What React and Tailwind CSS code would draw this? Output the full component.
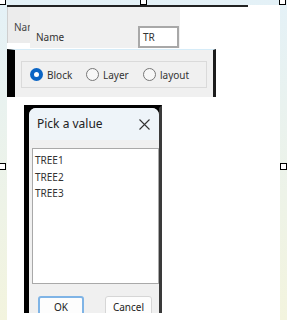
import React from "react";

const font = { fontFamily: '"Noto Sans", "Open Sans", sans-serif' };

const Handle = ({ className }) => (
  <div className={`absolute w-[7px] h-[7px] border border-black bg-white ${className}`} />
);

const Radio = ({ checked, label, width }) => (
  <div className={`flex items-center gap-[4px] ${width}`}>
    {checked ? (
      <span className="w-[13px] h-[13px] rounded-full bg-[#0a64c4] flex items-center justify-center">
        <span className="w-[5px] h-[5px] rounded-full bg-white" />
      </span>
    ) : (
      <span className="w-[13px] h-[13px] rounded-full border border-[#777] bg-[#f7f7f7]" />
    )}
    <span className="text-[10px] leading-none text-[#333]">{label}</span>
  </div>
);

export default function App() {
  return (
    <div
      className="relative w-[287px] h-[320px] overflow-hidden flex pl-[7px] pr-[7px] pt-[5px] bg-gradient-to-b from-[#e4f1f7] to-[#f3f4de]"
      style={font}
    >
      <div className="flex-1 bg-white flex flex-col">
        {/* top rule */}
        <div className="w-[241px] h-[2px] shrink-0 bg-[#222]" />

        {/* name panels */}
        <div className="flex items-start shrink-0">
          <div className="w-[23px] h-[36px] bg-[#ececec] overflow-hidden pl-[6px] pt-[15px] border-l border-[#cfcfcf]">
            <span className="block text-[10px] leading-none text-[#444] whitespace-nowrap">Name</span>
          </div>
          <div className="w-[150px] h-[41px] bg-[#f0f0f0] flex items-end">
            <span className="pl-[6px] pb-[6px] text-[10px] leading-none text-[#333]">Name</span>
            <div className="ml-auto mr-[1px] w-[41px] h-[22px] border-2 border-[#a8a8a8] bg-white flex items-center pl-[3px]">
              <span className="text-[10px] leading-none text-[#333]">TR</span>
            </div>
          </div>
        </div>

        {/* option panel */}
        <div className="mt-[1px] shrink-0 w-[209px] h-[48px] border-l-[8px] border-l-black border-r-[3px] border-r-[#1c1c1c] border-t border-t-[#d6ecf8] bg-[#f0f0f0] pt-[11px] px-[6px]">
          <div className="h-[27px] border border-[#dadada] flex items-center pl-[8px]">
            <Radio checked label="Block" width="w-[56px]" />
            <Radio label="Layer" width="w-[57px]" />
            <Radio label="layout" width="w-[50px]" />
          </div>
        </div>

        {/* dialog */}
        <div className="mt-[8px] ml-[17px] shrink-0 w-[138px] h-[208px] overflow-hidden bg-black border-l-[5px] border-l-black border-t-[3px] border-t-black border-r-[3px] border-r-[#3a3a3a]">
          <div className="h-full bg-[#f0f0f0] rounded-t-[7px] overflow-hidden flex flex-col">
            <div className="h-[32px] shrink-0 bg-[#eef4f9] flex items-center justify-between pl-[8px] pr-[9px]">
              <span className="text-[12px] leading-none text-[#222]">Pick a value</span>
              <svg width="11" height="11" viewBox="0 0 11 11" fill="none" stroke="#333" strokeWidth="1.1">
                <path d="M0.5 0.5 L10.5 10.5 M10.5 0.5 L0.5 10.5" />
              </svg>
            </div>
            <div className="mt-[8px] ml-[3px] shrink-0 w-[127px] h-[136px] border border-[#a9a9a9] bg-white pl-[2px] pt-[3px]">
              {["TREE1", "TREE2", "TREE3"].map((t) => (
                <div key={t} className="text-[10px] leading-[16.5px] text-[#333]">
                  {t}
                </div>
              ))}
            </div>
            <div className="flex shrink-0 mt-[12px] pl-[9px] gap-[21px]">
              <div className="w-[46px] h-[22px] border-2 border-[#7fb4e6] rounded-[3px] bg-[#fdfdfd] flex items-center justify-center">
                <span className="text-[10px] leading-none text-[#222]">OK</span>
              </div>
              <div className="w-[47px] h-[22px] border border-[#d6d6d6] rounded-[3px] bg-[#fdfdfd] flex items-center justify-center">
                <span className="text-[10px] leading-none text-[#222]">Cancel</span>
              </div>
            </div>
          </div>
        </div>
      </div>

      {/* selection handles */}
      <Handle className="-left-[1px] -top-[2px]" />
      <Handle className="left-[140px] -top-[2px]" />
      <Handle className="left-[279px] -top-[2px]" />
      <Handle className="-left-[1px] top-[163px]" />
      <Handle className="left-[280px] top-[163px]" />
    </div>
  );
}
